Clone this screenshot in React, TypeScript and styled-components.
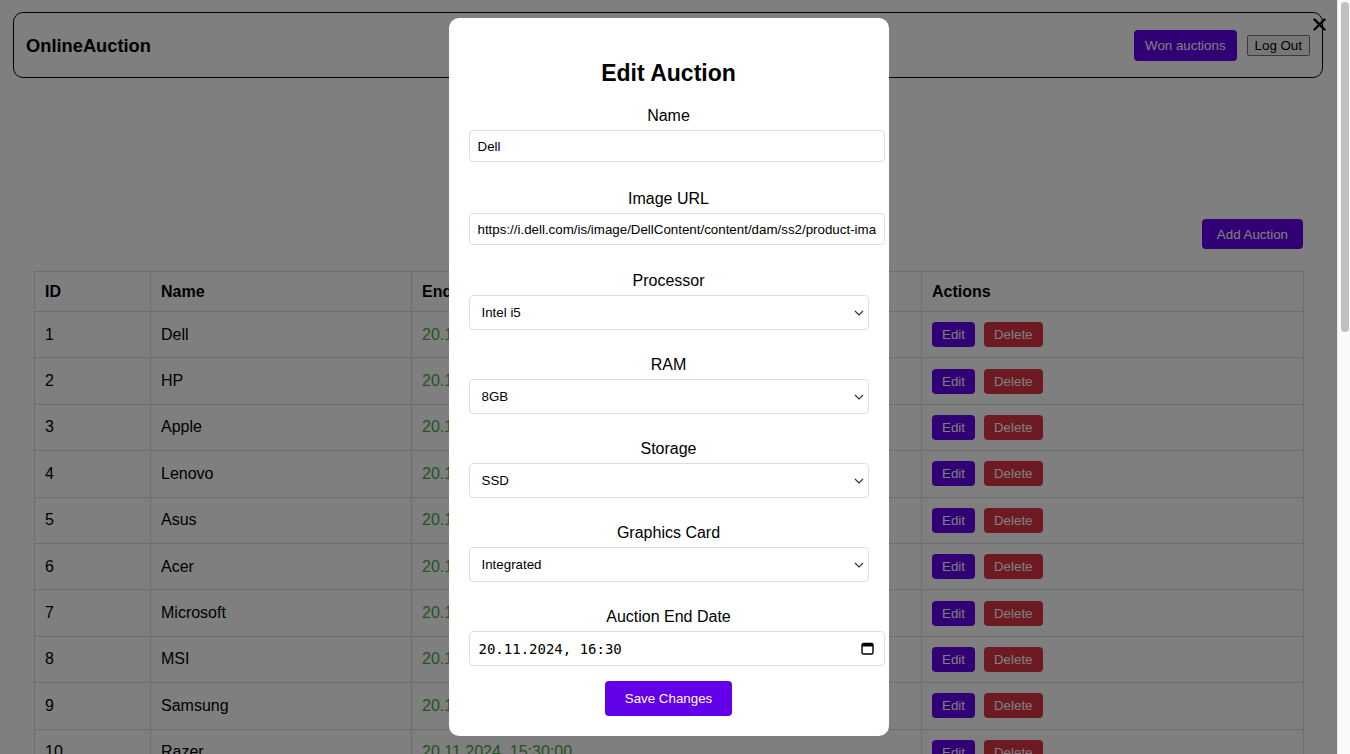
import React from "react";
import styled, { createGlobalStyle } from "styled-components";

const Global = createGlobalStyle`
  html, body { margin: 0; padding: 0; height: 100%; overflow: hidden; }
  body { font-family: "Liberation Sans", Arial, sans-serif; color: #000; background: #fff; }
  * { box-sizing: border-box; }
`;

const Viewport = styled.div`
  display: flex;
  height: 100vh;
  width: 100vw;
`;

const Page = styled.div`
  flex: 1;
  position: relative;
  overflow: hidden;
  background: #fff;
`;

const ScrollTrack = styled.div`
  width: 13px;
  flex: none;
  background: #fafafa;
  border-left: 1px solid #e6e6e6;
  padding: 2px 1px 0 3px;
`;

const ScrollThumb = styled.div`
  height: 330px;
  border-radius: 5px;
  background: #c1c1c1;
`;

const Header = styled.header`
  margin: 12px 14px 0 13px;
  height: 66px;
  border: 1px solid #000;
  border-radius: 10px;
  padding: 0 12px;
  display: flex;
  align-items: center;
  justify-content: space-between;
`;

const Brand = styled.div`
  font-size: 18.3px;
  font-weight: 700;
  padding-top: 2px;
`;

const HeaderActions = styled.div`
  display: flex;
  align-items: center;
  gap: 10px;
`;

const PrimaryButton = styled.button<{ $px: number; $h: number }>`
  font-family: "Liberation Sans", Arial, sans-serif;
  font-size: 13.333px;
  color: #fff;
  background: #6200ea;
  border: none;
  border-radius: 4px;
  height: ${(p) => p.$h}px;
  padding: 0 ${(p) => p.$px}px;
  cursor: pointer;
`;

const PlainButton = styled.button`
  font-family: "Liberation Sans", Arial, sans-serif;
  font-size: 13.333px;
  color: #000;
  background: #efefef;
  border: 1px solid #767676;
  border-radius: 2px;
  height: 21px;
  padding: 0 7px;
`;

const Main = styled.main`
  padding: 0 34px;
`;

const Toolbar = styled.div`
  display: flex;
  justify-content: flex-end;
  margin-top: 141px;
  margin-bottom: 22px;
`;

const Table = styled.table`
  width: 100%;
  border-collapse: collapse;
  table-layout: fixed;
`;

const Th = styled.th<{ $w: number }>`
  width: ${(p) => p.$w}px;
  height: 40px;
  text-align: left;
  font-size: 16px;
  font-weight: 700;
  padding: 0 10px;
  border: 1px solid #ddd;
`;

const Td = styled.td<{ $green?: boolean }>`
  height: 46.4px;
  font-size: 16px;
  padding: 0 10px;
  border: 1px solid #ddd;
  color: ${(p) => (p.$green ? "#46a84a" : "#000")};
  white-space: nowrap;
`;

const ActionButton = styled.button<{ $danger?: boolean }>`
  font-family: "Liberation Sans", Arial, sans-serif;
  font-size: 13.333px;
  color: #fff;
  background: ${(p) => (p.$danger ? "#dc3545" : "#6200ea")};
  border: none;
  border-radius: 4px;
  height: 25px;
  padding: 0 10px;
  margin-right: 9px;
  vertical-align: middle;
`;

const Overlay = styled.div`
  position: absolute;
  inset: 0;
  background: rgba(0, 0, 0, 0.5);
  display: flex;
  align-items: center;
  justify-content: center;
`;

const CloseButton = styled.button`
  position: absolute;
  top: 18px;
  right: 11px;
  width: 13px;
  height: 13px;
  padding: 0;
  border: none;
  background: none;
  display: flex;
`;

const Modal = styled.div`
  width: 440px;
  background: #fff;
  border-radius: 10px;
  padding: 20px;
  text-align: center;
`;

const Title = styled.h2`
  font-size: 23px;
  font-weight: 700;
  margin: 22px 0 19px;
  line-height: 27px;
`;

const Field = styled.div<{ $gap: number }>`
  margin-bottom: ${(p) => p.$gap}px;
  text-align: left;
`;

const Label = styled.label`
  display: block;
  text-align: center;
  font-size: 16px;
  line-height: 19px;
  margin-bottom: 5px;
`;

const TextInput = styled.input`
  display: block;
  width: calc(100% + 16px);
  height: 32px;
  padding: 0 8px;
  font-family: "Liberation Sans", Arial, sans-serif;
  font-size: 13.333px;
  color: #000;
  border: 1px solid #dedede;
  border-radius: 4px;
  outline: none;
`;

const SelectWrap = styled.div`
  position: relative;
`;

const Select = styled.select`
  display: block;
  width: 100%;
  height: 35px;
  padding: 0 12px;
  appearance: none;
  -webkit-appearance: none;
  font-family: "Liberation Sans", Arial, sans-serif;
  font-size: 13.333px;
  color: #000;
  background: #fff;
  border: 1px solid #dedede;
  border-radius: 4px;
  outline: none;
`;

const Chevron = styled.svg`
  position: absolute;
  right: 5px;
  top: 15px;
  pointer-events: none;
`;

const DateBox = styled.div`
  width: calc(100% + 16px);
  height: 35px;
  border: 1px solid #dedede;
  border-radius: 4px;
  padding: 0 10px 0 9px;
  display: flex;
  align-items: center;
  justify-content: space-between;
`;

const DateText = styled.span`
  font-family: "DejaVu Sans Mono", "Liberation Mono", monospace;
  font-size: 14px;
  color: #000;
`;

const CalendarIcon = styled.svg`
  flex: none;
`;

const SaveButton = styled(PrimaryButton)`
  margin-top: 15px;
`;

const rows = [
  "Dell", "HP", "Apple", "Lenovo", "Asus", "Acer", "Microsoft", "MSI", "Samsung", "Razer",
  "Toshiba", "Sony", "LG", "Huawei", "Xiaomi",
];

const ChevronIcon = () => (
  <Chevron width="10" height="6" viewBox="0 0 10 6">
    <polyline points="1,1 5,5 9,1" fill="none" stroke="#333" strokeWidth="1.2" />
  </Chevron>
);

const selects = [
  { label: "Processor", value: "Intel i5", options: ["Intel i3", "Intel i5", "Intel i7", "AMD Ryzen 5", "AMD Ryzen 7"] },
  { label: "RAM", value: "8GB", options: ["4GB", "8GB", "16GB", "32GB"] },
  { label: "Storage", value: "SSD", options: ["SSD", "HDD"] },
  { label: "Graphics Card", value: "Integrated", options: ["Integrated", "Dedicated"] },
];

export default function App() {
  return (
    <>
      <Global />
      <Viewport>
        <Page>
          <Header>
            <Brand>OnlineAuction</Brand>
            <HeaderActions>
              <PrimaryButton $px={11} $h={31}>Won auctions</PrimaryButton>
              <PlainButton>Log Out</PlainButton>
            </HeaderActions>
          </Header>
          <Main>
            <Toolbar>
              <PrimaryButton $px={15} $h={30}>Add Auction</PrimaryButton>
            </Toolbar>
            <Table>
              <thead>
                <tr>
                  <Th $w={116}>ID</Th>
                  <Th $w={261}>Name</Th>
                  <Th $w={510}>End Date</Th>
                  <Th $w={382}>Actions</Th>
                </tr>
              </thead>
              <tbody>
                {rows.map((name, i) => (
                  <tr key={name}>
                    <Td>{i + 1}</Td>
                    <Td>{name}</Td>
                    <Td $green>20.11.2024, 15:30:00</Td>
                    <Td>
                      <ActionButton>Edit</ActionButton>
                      <ActionButton $danger>Delete</ActionButton>
                    </Td>
                  </tr>
                ))}
              </tbody>
            </Table>
          </Main>
          <Overlay>
            <CloseButton aria-label="Close">
              <svg width="13" height="13" viewBox="0 0 13 13">
                <path d="M1.5 1.5 L11.5 11.5 M11.5 1.5 L1.5 11.5" stroke="#000" strokeWidth="2.4" strokeLinecap="round" />
              </svg>
            </CloseButton>
            <Modal>
              <Title>Edit Auction</Title>
              <Field $gap={27}>
                <Label>Name</Label>
                <TextInput defaultValue="Dell" />
              </Field>
              <Field $gap={26}>
                <Label>Image URL</Label>
                <TextInput defaultValue="https://i.dell.com/is/image/DellContent/content/dam/ss2/product-images/dell-client-products/notebooks" />
              </Field>
              {selects.map((s) => (
                <Field $gap={25} key={s.label}>
                  <Label>{s.label}</Label>
                  <SelectWrap>
                    <Select defaultValue={s.value}>
                      {s.options.map((o) => (
                        <option key={o}>{o}</option>
                      ))}
                    </Select>
                    <ChevronIcon />
                  </SelectWrap>
                </Field>
              ))}
              <Field $gap={0}>
                <Label>Auction End Date</Label>
                <DateBox>
                  <DateText>20.11.2024, 16:30</DateText>
                  <CalendarIcon width="13" height="13" viewBox="0 0 13 13">
                    <rect x="1" y="1.5" width="11" height="10.5" rx="1.5" fill="none" stroke="#000" strokeWidth="1.4" />
                    <rect x="1" y="1.5" width="11" height="3" fill="#000" />
                  </CalendarIcon>
                </DateBox>
              </Field>
              <SaveButton $px={20} $h={35}>Save Changes</SaveButton>
            </Modal>
          </Overlay>
        </Page>
        <ScrollTrack>
          <ScrollThumb />
        </ScrollTrack>
      </Viewport>
    </>
  );
}
